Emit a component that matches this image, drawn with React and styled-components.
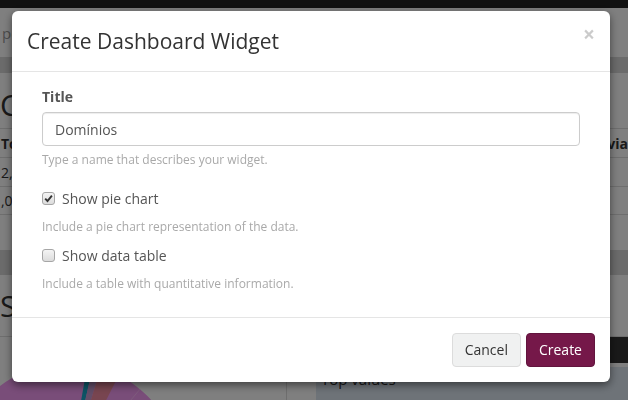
import React from "react";
import styled, { createGlobalStyle } from "styled-components";

const Global = createGlobalStyle`
  * { box-sizing: border-box; }
  html, body { margin: 0; padding: 0; }
  body {
    width: 628px;
    height: 400px;
    overflow: hidden;
    background: #fff;
    font-family: "Open Sans", "Liberation Sans", sans-serif;
    font-size: 14px;
    color: #333;
  }
`;

/* ---------- background page ---------- */
const Page = styled.div`
  width: 628px;
  height: 400px;
  overflow: hidden;
  display: flex;
  flex-direction: column;
  background: #fff;
`;
const Navbar = styled.div`
  height: 8px;
  background: #222;
  flex: none;
`;
const Crumbs = styled.div`
  height: 49px;
  display: flex;
  align-items: center;
  padding-left: 2px;
  color: #999;
  font-size: 15px;
  flex: none;
`;
const Strip = styled.div`
  height: ${(p) => p.$h}px;
  background: #d6d6d6;
  flex: none;
`;
const PageHeading = styled.div`
  height: ${(p) => p.$h}px;
  display: flex;
  align-items: center;
  padding-top: ${(p) => p.$pt || 0}px;
  font-size: 30px;
  color: #333;
  flex: none;
  border-bottom: ${(p) => (p.$border ? "1px solid #ddd" : "none")};
`;
const Table = styled.div`
  display: flex;
  flex-direction: column;
  border-top: 1px solid #ddd;
  flex: none;
`;
const TRow = styled.div`
  height: ${(p) => p.$h}px;
  display: flex;
  align-items: center;
  justify-content: space-between;
  border-bottom: 1px solid #ddd;
  font-weight: ${(p) => (p.$head ? 700 : 400)};
  color: #333;
  padding: 0 0 0 1px;
`;
const Gap = styled.div`
  height: ${(p) => p.$h}px;
  flex: none;
`;
const BottomGrid = styled.div`
  flex: 1;
  display: grid;
  grid-template-columns: 287px 1fr;
`;
const ChartCol = styled.div`
  border-right: 1px solid #ddd;
  overflow: hidden;
`;
const PanelCol = styled.div`
  padding-left: 29px;
  display: flex;
  flex-direction: column;
`;
const DarkBar = styled.div`
  height: 26px;
  background: #333;
  margin-left: -29px;
`;
const ValuesPanel = styled.div`
  flex: 1;
  background: #dce6f0;
  margin-top: 4px;
  padding: 2px 5px 0;
  color: #333;
  font-size: 15px;
`;

/* ---------- modal ---------- */
const Backdrop = styled.div`
  position: fixed;
  inset: 0;
  background: rgba(0, 0, 0, 0.5);
`;
const ModalWrap = styled.div`
  position: fixed;
  inset: 0;
`;
const Dialog = styled.div`
  margin: 11px 0 0 12px;
  width: 598px;
  background: #fff;
  border-radius: 6px;
  box-shadow: 0 3px 9px rgba(0, 0, 0, 0.5);
  display: flex;
  flex-direction: column;
`;
const Header = styled.div`
  display: flex;
  align-items: flex-start;
  justify-content: space-between;
  padding: 15px;
  border-bottom: 1px solid #e5e5e5;
`;
const Title = styled.h4`
  margin: 0;
  font-size: 21px;
  line-height: 30px;
  font-weight: 400;
  color: #333;
`;
const Close = styled.button`
  border: 0;
  background: transparent;
  padding: 0;
  margin-top: -2px;
  font-family: "Open Sans", "Liberation Sans", sans-serif;
  font-size: 21px;
  font-weight: 700;
  line-height: 1;
  color: #000;
  opacity: 0.2;
  cursor: pointer;
`;
const Body = styled.div`
  padding: 15px 30px 16px 30px;
  display: flex;
  flex-direction: column;
`;
const Label = styled.label`
  font-weight: 700;
  font-size: 14px;
  line-height: 20px;
  color: #555;
  margin-bottom: 5px;
`;
const Input = styled.input`
  height: 34px;
  width: 100%;
  padding: 6px 12px;
  border: 1px solid #ccc;
  border-radius: 4px;
  box-shadow: inset 0 1px 1px rgba(0, 0, 0, 0.075);
  font-family: "Open Sans", "Liberation Sans", sans-serif;
  font-size: 14px;
  color: #555;
  outline: none;
`;
const Help = styled.div`
  margin-top: ${(p) => p.$mt}px;
  font-size: 12px;
  line-height: 17px;
  color: #a9a9a9;
`;
const CheckRow = styled.label`
  margin-top: ${(p) => p.$mt}px;
  display: flex;
  align-items: center;
  height: 20px;
  font-size: 14px;
  color: #555;
  gap: 7px;
`;
const Box = styled.span`
  width: 13px;
  height: 13px;
  border: 1px solid #a6a6a6;
  border-radius: 3px;
  background: linear-gradient(#f4f4f4, #dcdcdc);
  display: flex;
  align-items: center;
  justify-content: center;
  flex: none;
`;
const Footer = styled.div`
  display: flex;
  justify-content: flex-end;
  gap: 5px;
  padding: 15px;
  border-top: 1px solid #e5e5e5;
`;
const Button = styled.button`
  height: 34px;
  padding: 6px 12px;
  border-radius: 4px;
  font-family: "Open Sans", "Liberation Sans", sans-serif;
  font-size: 14px;
  line-height: 20px;
  border: 1px solid ${(p) => (p.$primary ? "#62143d" : "#dcdcdc")};
  background: ${(p) => (p.$primary ? "#751849" : "#f0f1f1")};
  color: ${(p) => (p.$primary ? "#fff" : "#333")};
  min-width: 69px;
`;

function Check({ checked }) {
  return (
    <Box>
      {checked && (
        <svg width="9" height="9" viewBox="0 0 9 9">
          <path d="M1.2 4.6 L3.5 7 L7.9 1.6" fill="none" stroke="#333" strokeWidth="1.9" />
        </svg>
      )}
    </Box>
  );
}

function Pie() {
  const cx = 68, cy = 475, r = 112;
  const pt = (deg) => {
    const a = (deg * Math.PI) / 180;
    return [cx + r * Math.sin(a), cy - r * Math.cos(a)];
  };
  const slice = (a0, a1, color) => {
    const [x0, y0] = pt(a0);
    const [x1, y1] = pt(a1);
    const large = a1 - a0 > 180 ? 1 : 0;
    return <path d={`M${cx} ${cy} L${x0} ${y0} A${r} ${r} 0 ${large} 1 ${x1} ${y1} Z`} fill={color} />;
  };
  return (
    <svg width="287" height="63" viewBox="0 337 287 63" style={{ display: "block" }}>
      {slice(0, 359.99, "#f39af2")}
      {slice(10, 13, "#1aa6c8")}
      {slice(13, 17, "#c69ad0")}
      {slice(17, 27, "#f08ba0")}
      <path d={`M${cx} ${cy} L${pt(40)[0]} ${pt(40)[1]}`} stroke="#fbb6f8" strokeWidth="1" />
    </svg>
  );
}

export default function App() {
  return (
    <>
      <Global />
      <Page>
        <Navbar />
        <Crumbs>pesquisa</Crumbs>
        <Strip $h={16} />
        <PageHeading $h={55} $pt={8}>Consultas</PageHeading>
        <Table>
          <TRow $h={29} $head>
            <span>Total</span>
            <span>Desvia</span>
          </TRow>
          <TRow $h={29}>
            <span>2,5</span>
            <span></span>
          </TRow>
          <TRow $h={28}>
            <span>,04</span>
            <span></span>
          </TRow>
        </Table>
        <Gap $h={35} />
        <Strip $h={25} />
        <PageHeading $h={62} $border>Sumário</PageHeading>
        <BottomGrid>
          <ChartCol>
            <Pie />
          </ChartCol>
          <PanelCol>
            <DarkBar />
            <ValuesPanel>Top values</ValuesPanel>
          </PanelCol>
        </BottomGrid>
      </Page>
      <Backdrop />
      <ModalWrap>
        <Dialog>
          <Header>
            <Title>Create Dashboard Widget</Title>
            <Close aria-label="Close">×</Close>
          </Header>
          <Body>
            <Label>Title</Label>
            <Input defaultValue="Domínios" />
            <Help $mt={5}>Type a name that describes your widget.</Help>
            <CheckRow $mt={20}>
              <Check checked />
              Show pie chart
            </CheckRow>
            <Help $mt={10}>Include a pie chart representation of the data.</Help>
            <CheckRow $mt={10}>
              <Check />
              Show data table
            </CheckRow>
            <Help $mt={10}>Include a table with quantitative information.</Help>
            <Gap $h={9} />
          </Body>
          <Footer>
            <Button>Cancel</Button>
            <Button $primary>Create</Button>
          </Footer>
        </Dialog>
      </ModalWrap>
    </>
  );
}
